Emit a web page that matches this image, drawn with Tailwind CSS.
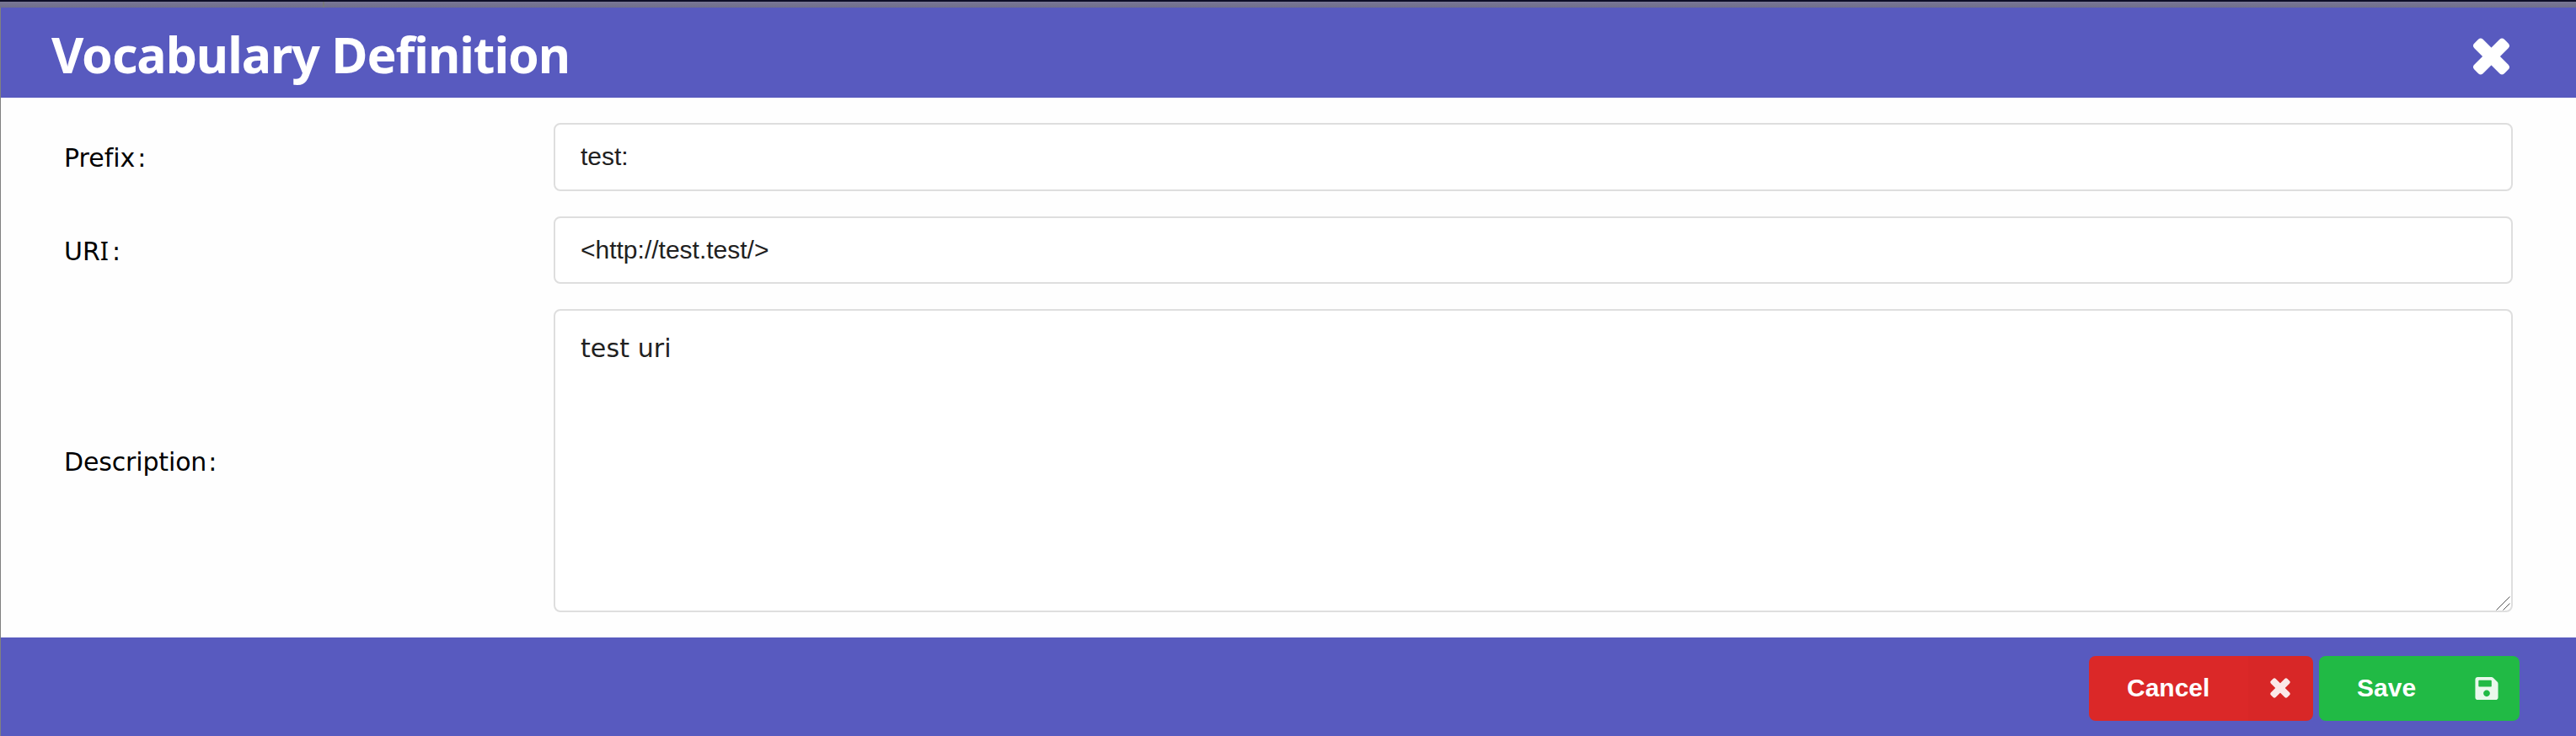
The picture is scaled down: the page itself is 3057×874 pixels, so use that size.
<!DOCTYPE html>
<html lang="en">
<head>
<meta charset="utf-8">
<title>Vocabulary Definition</title>
<script src="https://cdn.jsdelivr.net/npm/@tailwindcss/browser@4"></script>
</head>
<body class="h-[874px] w-[3057px] overflow-hidden bg-[#808080]">
<div class="flex h-full flex-col">
  <div class="h-[2px] bg-[#0d0d28]"></div>
  <div class="flex h-[7px] bg-linear-to-b from-[#797796] to-[#706f8c]">
    <div class="ml-[383px] w-[2px] bg-[#77787c]"></div>
  </div>
  <main class="ml-px flex flex-1 flex-col bg-[#fefefe]">
    <header class="flex h-[107px] items-center justify-between bg-[#585abf] pl-[60px] pr-[78px] text-white">
      <h1 class="pt-[3px] font-['Noto_Sans'] text-[59px] leading-[80px] font-bold tracking-[-1.05px] whitespace-nowrap">Vocabulary Definition</h1>
      <button class="mt-[9px] size-[44px]" aria-label="Close">
        <svg class="size-[44px]" viewBox="-21.5 -22 44 44" fill="currentColor"><rect x="-25.2" y="-7.3" width="50.4" height="14.6" rx="4" transform="rotate(45)"/><rect x="-25.2" y="-7.3" width="50.4" height="14.6" rx="4" transform="rotate(-45)"/></svg>
      </button>
    </header>
    <form class="grid h-[641px] grid-cols-[581px_2325px] grid-rows-[81px_80px_360px] gap-y-[30px] pt-[30px] pl-[75px] font-['DejaVu_Sans','sans-serif'] text-[30px] text-black">
      <label class="self-center pt-[2px] [font-variant-ligatures:none]">Prefix<span class="ml-[3px]">:</span></label>
      <div class="flex items-center rounded-[8px] border-2 border-[#dedede] bg-white px-[30px] pb-[3px] font-['Liberation_Sans'] text-[#212121]">test:</div>
      <label class="self-center pt-[3px]">UR<span class="font-['Noto_Sans'] leading-none">I</span><span class="ml-[4px]">:</span></label>
      <div class="flex items-center rounded-[8px] border-2 border-[#dedede] bg-white px-[30px] pb-[2px] font-['Liberation_Sans'] text-[#212121]">&lt;http://test.test/&gt;</div>
      <label class="self-center pt-[3px] tracking-[-0.15px]">Description<span class="ml-[2px]">:</span></label>
      <div class="relative rounded-[8px] border-2 border-[#dedede] bg-white px-[30px] pt-[23px] leading-[44px] tracking-[0.1px] text-[#212121]">test uri
        <svg class="absolute right-0 bottom-0 size-[18px]" viewBox="0 0 18 18" fill="none" stroke="#555" stroke-width="1"><path d="M.5 17.5 16.5 1.5M8.5 17.5l8-8"/></svg>
      </div>
    </form>
    <footer class="flex flex-1 items-start justify-end gap-[7px] bg-[#585abf] pt-[22px] pr-[67px] font-['Liberation_Sans'] text-[30px] font-bold text-white">
      <button class="flex h-[77px] w-[266px] overflow-hidden rounded-[8px] bg-[#db2828]">
        <span class="flex h-full w-[189px] items-center pb-[2px] pl-[45px]">Cancel</span>
        <span class="flex h-full w-[77px] items-center justify-center bg-black/[0.01] pr-px pb-px"><svg class="size-[24px] opacity-90" viewBox="-22 -22 44 44" fill="currentColor"><rect x="-25.2" y="-7.3" width="50.4" height="14.6" rx="4" transform="rotate(45)"/><rect x="-25.2" y="-7.3" width="50.4" height="14.6" rx="4" transform="rotate(-45)"/></svg></span>
      </button>
      <button class="flex h-[77px] w-[238px] overflow-hidden rounded-[8px] bg-[#21ba45]">
        <span class="flex h-full w-[161px] items-center pb-[2px] pl-[45px]">Save</span>
        <span class="flex h-full w-[77px] items-center justify-center pr-[2px] pb-px"><svg class="h-[31px] w-[28px] text-white/90" viewBox="0 0 448 512" fill="currentColor"><path d="M433.941 129.941l-83.882-83.882A48 48 0 0 0 316.118 32H48C21.49 32 0 53.49 0 80v352c0 26.51 21.49 48 48 48h352c26.51 0 48-21.49 48-48V163.882a48 48 0 0 0-14.059-33.941zM224 416c-35.346 0-64-28.654-64-64 0-35.346 28.654-64 64-64s64 28.654 64 64c0 35.346-28.654 64-64 64zm96-304.52V212c0 6.627-5.373 12-12 12H76c-6.627 0-12-5.373-12-12V108c0-6.627 5.373-12 12-12h228.52c3.183 0 6.235 1.264 8.485 3.515l3.48 3.48A11.996 11.996 0 0 1 320 111.48z"/></svg></span>
      </button>
    </footer>
  </main>
</div>
</body>
</html>
